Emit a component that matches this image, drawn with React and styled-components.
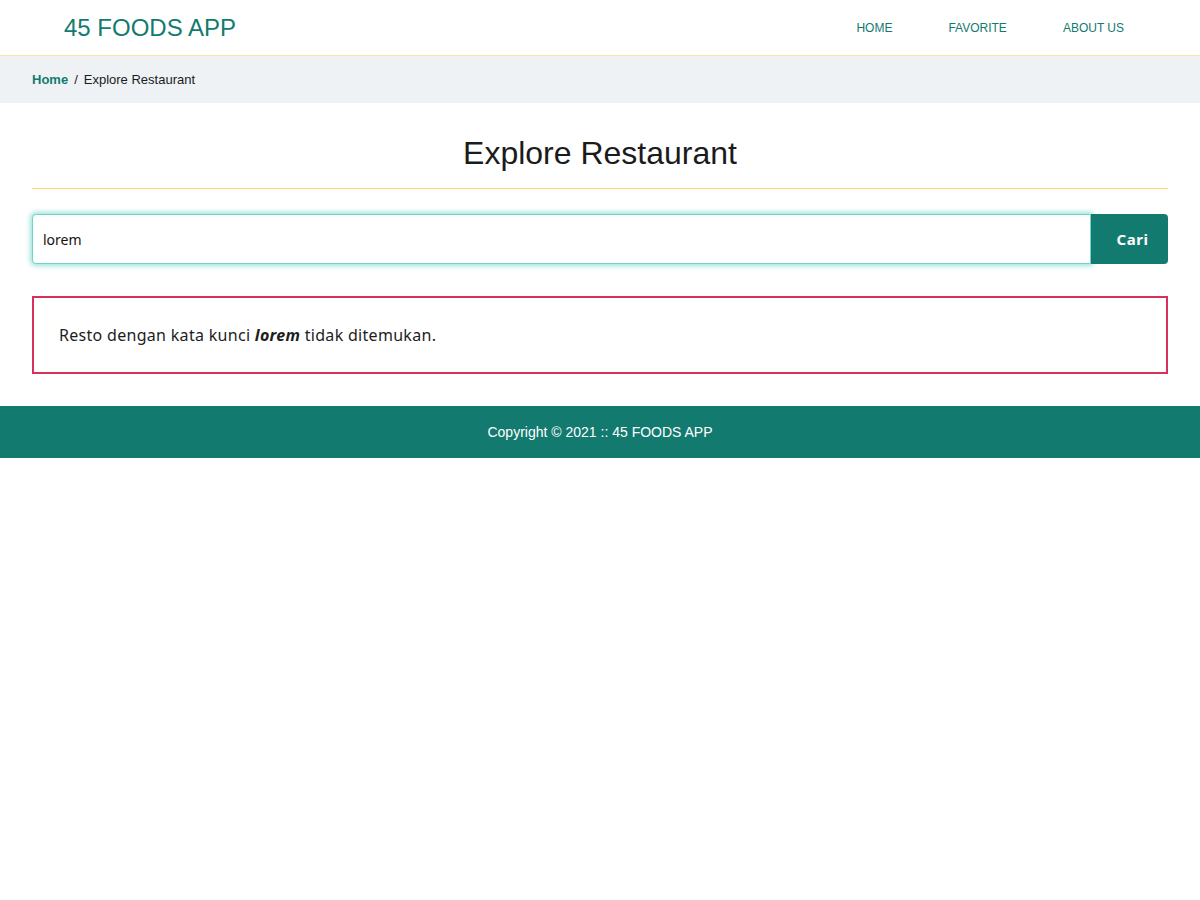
import React from 'react';
import styled, { createGlobalStyle } from 'styled-components';

const GlobalStyle = createGlobalStyle`
  body {
    margin: 0;
    background: #fff;
    font-family: 'Liberation Sans', Arial, sans-serif;
  }
  * {
    box-sizing: border-box;
  }
`;

const teal = '#137a70';

const Header = styled.header`
  display: flex;
  align-items: center;
  justify-content: space-between;
  height: 56px;
  padding: 1px 48px 0 64px;
  border-bottom: 1px solid #fbe3a8;
  background: #fff;
`;

const Logo = styled.a`
  color: ${teal};
  font-size: 24px;
  text-decoration: none;
`;

const Nav = styled.nav`
  display: flex;
  align-items: center;
`;

const NavLink = styled.a`
  padding: 0 28px;
  color: ${teal};
  font-size: 12px;
  text-decoration: none;
  text-transform: uppercase;
`;

const Breadcrumb = styled.div`
  display: flex;
  align-items: center;
  gap: 6px;
  height: 47px;
  padding: 0 32px;
  background: #eef2f5;
  font-size: 13px;
  color: #1b1b1b;
`;

const Crumb = styled.a`
  color: ${teal};
  font-weight: 700;
  text-decoration: none;
`;

const Main = styled.main`
  padding: 32px 32px;
`;

const Title = styled.h2`
  margin: 0 0 25px;
  padding: 0 0 16px;
  border-bottom: 1px solid #fcd96a;
  font-size: 32px;
  font-weight: 400;
  text-align: center;
  color: #1b1b1b;
`;

const SearchForm = styled.form`
  display: flex;
  height: 50px;
  margin-bottom: 32px;
`;

const SearchInput = styled.input`
  flex: 1;
  min-width: 0;
  height: 100%;
  padding: 0 10px;
  border: 1px solid #6fd3c9;
  border-radius: 4px 0 0 4px;
  box-shadow: 0 0 5px 2px #9fe3dc;
  outline: none;
  font-family: 'Noto Sans', sans-serif;
  font-size: 14px;
  color: #111;
`;

const SearchButton = styled.button`
  width: 77px;
  height: 100%;
  padding: 0 0 0 6px;
  border: none;
  border-radius: 0 4px 4px 0;
  background: ${teal};
  color: #fff;
  font-family: 'Noto Sans', sans-serif;
  font-size: 15px;
  font-weight: 700;
  letter-spacing: 0.5px;
  cursor: pointer;
`;

const Alert = styled.div`
  display: flex;
  align-items: center;
  height: 78px;
  padding: 0 25px;
  border: 2px solid #d8305a;
  font-family: 'Noto Sans', sans-serif;
  font-size: 16px;
  letter-spacing: 0.3px;
  color: #1d1d1d;

  em {
    font-weight: 700;
  }
`;

const Footer = styled.footer`
  display: flex;
  align-items: center;
  justify-content: center;
  height: 52px;
  background: ${teal};
  color: #fff;
  font-size: 14px;
`;

export default function App() {
  const keyword = 'lorem';
  return (
    <>
      <GlobalStyle />
      <Header>
        <Logo href="#/">45 FOODS APP</Logo>
        <Nav>
          <NavLink href="#/">Home</NavLink>
          <NavLink href="#/favorite">Favorite</NavLink>
          <NavLink href="#/about">About Us</NavLink>
        </Nav>
      </Header>
      <Breadcrumb>
        <Crumb href="#/">Home</Crumb>
        <span>/</span>
        <span>Explore Restaurant</span>
      </Breadcrumb>
      <Main>
        <Title>Explore Restaurant</Title>
        <SearchForm onSubmit={e => e.preventDefault()}>
          <SearchInput defaultValue={keyword} />
          <SearchButton type="submit">Cari</SearchButton>
        </SearchForm>
        <Alert>
          <span>
            {'Resto dengan kata kunci '}
            <em>{keyword}</em>
            {' tidak ditemukan.'}
          </span>
        </Alert>
      </Main>
      <Footer>Copyright © 2021 :: 45 FOODS APP</Footer>
    </>
  );
}
